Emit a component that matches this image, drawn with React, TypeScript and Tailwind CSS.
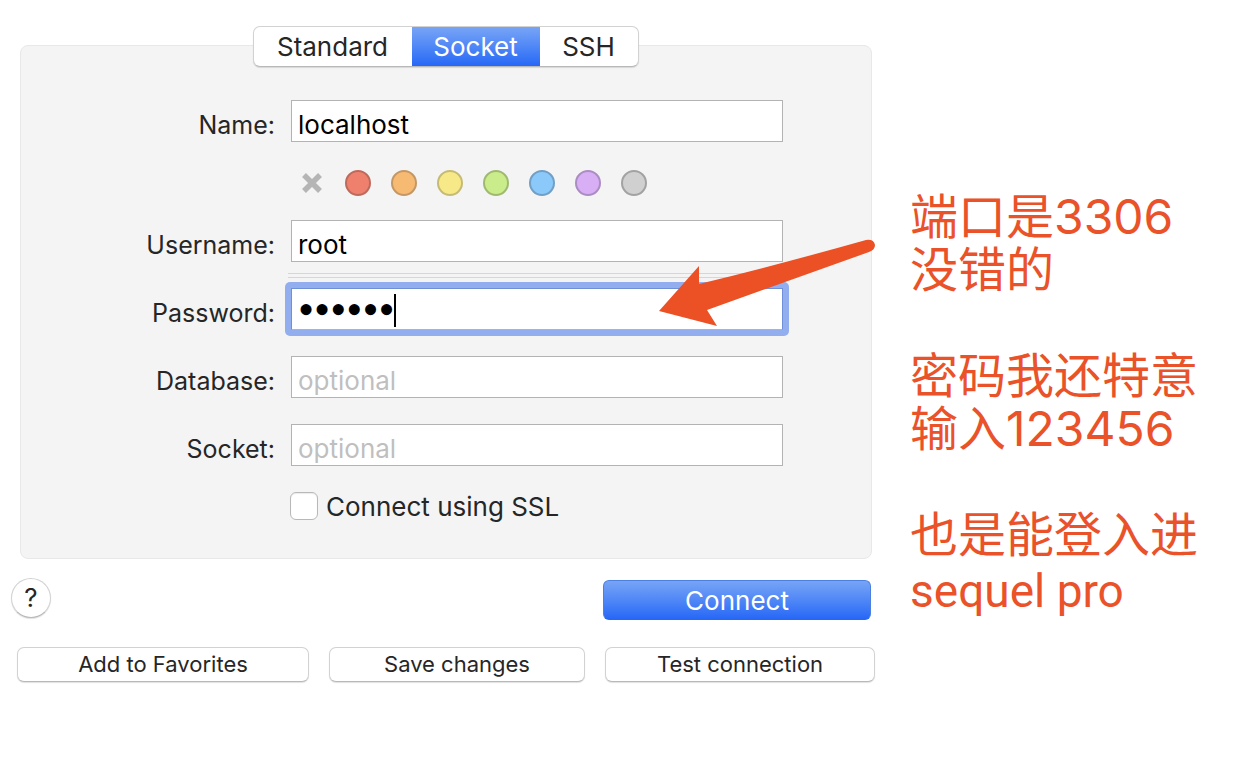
import { useState } from "react";

const tabs = [
  { name: "Standard", width: "w-[158px]" },
  { name: "Socket", width: "w-[128px]" },
  { name: "SSH", width: "w-[98px]" },
];

const colors = [
  { name: "Red", style: "bg-[#ee806d] border-[#bd6a5c]" },
  { name: "Orange", style: "bg-[#f6ba73] border-[#c59764]" },
  { name: "Yellow", style: "bg-[#f7e888] border-[#c6bb74]" },
  { name: "Green", style: "bg-[#caec8a] border-[#9fba70]" },
  { name: "Blue", style: "bg-[#8ac9fa] border-[#719fc6]" },
  { name: "Purple", style: "bg-[#d8aef5] border-[#ab8cc3]" },
  { name: "Gray", style: "bg-[#d0d0d0] border-[#a2a2a2]" },
];

const note = "端口是3306\n没错的\n\n密码我还特意\n输入123456\n\n也是能登入进";

const row = "grid grid-cols-[254px_1fr] gap-4 h-[42px]";
const label = "text-right text-[25px] leading-8 pt-[9px]";
const field = "block w-full h-[42px] min-w-0 bg-white border border-[#b3b3b3] px-[6px] pt-[6px] text-black outline-none placeholder:text-[#bfbfbf] placeholder:opacity-100";
const plainButton = "bg-white border border-[#d2d2d2] border-b-[#b8b8b8] shadow-[0_1px_1px_rgba(0,0,0,0.12)]";
const blueButton = "bg-linear-to-b from-[#78a4f6] to-[#2667f6] text-white";

const Tabs = () => {
  const [active, setActive] = useState("Socket");
  return (
    <div role="tablist" className={`flex h-[41px] w-fit mx-auto relative z-10 rounded-[7px] overflow-hidden ${plainButton}`}>
      {tabs.map((tab) => (
        <button
          key={tab.name}
          role="tab"
          aria-selected={active === tab.name}
          onClick={() => setActive(tab.name)}
          className={`${tab.width} ${active === tab.name ? blueButton : ""}`}
        >
          {tab.name}
        </button>
      ))}
    </div>
  );
};

const Swatches = () => (
  <div className="flex items-center gap-5 mt-7 mb-6 pl-[278px] h-[26px]">
    <button type="button" aria-label="No color" className="w-[26px] h-[26px]">
      <svg viewBox="0 0 26 26" className="w-full h-full" stroke="#b5b5b5" strokeWidth="5.4">
        <path d="M5 5L21 21M21 5L5 21" />
      </svg>
    </button>
    {colors.map((color) => (
      <input
        key={color.name}
        type="radio"
        name="color"
        aria-label={color.name}
        className={`appearance-none w-[26px] h-[26px] rounded-full border-2 ${color.style}`}
      />
    ))}
  </div>
);

const PasswordRow = () => (
  <div className={`${row} mt-[26px]`}>
    <label htmlFor="password" className={label}>Password:</label>
    <div className="relative">
      <div className="absolute -top-[15px] -left-[3px] right-0 h-[5px] border-y border-[#c6d8f4]" />
      <div className="-m-[6px] p-[6px] rounded-[5px] bg-[#92aeef]">
        <input
          id="password"
          type="password"
          defaultValue="123456"
          className="block w-full h-[42px] bg-white border border-[#b3b3b3] border-t-[#6f90d8] border-x-[#6f90d8] px-[6px] text-[46px] text-black outline-none font-['Liberation_Serif',serif]"
        />
      </div>
      <div className="absolute left-[103px] top-[6px] w-[2px] h-[33px] bg-black" />
      <svg viewBox="0 0 218 88" className="absolute -right-[94px] -top-[49px] w-[218px] h-[88px]" fill="#ec5025">
        <path d="M0 72L40 27L40 45Q122 25 207 1Q215 0 216 6Q216 11 210 13L48 71L58 87Z" />
      </svg>
    </div>
  </div>
);

const ConnectionForm = () => (
  <form className="-mt-[22px] pt-[54px] pr-[88px] pb-[38px] bg-[#f4f4f4] border border-[#e8e8e8] rounded-[8px] ml-1 mr-[3px]">
    <div className={row}>
      <label htmlFor="name" className={label}>Name:</label>
      <input id="name" defaultValue="localhost" className={field} />
    </div>
    <Swatches />
    <div className={row}>
      <label htmlFor="username" className={label}>Username:</label>
      <input id="username" defaultValue="root" className={field} />
    </div>
    <PasswordRow />
    <div className={`${row} mt-[26px]`}>
      <label htmlFor="database" className={label}>Database:</label>
      <input id="database" placeholder="optional" className={field} />
    </div>
    <div className={`${row} mt-[26px]`}>
      <label htmlFor="socket" className={label}>Socket:</label>
      <input id="socket" placeholder="optional" className={field} />
    </div>
    <div className="flex items-center gap-2 mt-[26px] pl-[269px] h-7">
      <input
        id="ssl"
        type="checkbox"
        className="appearance-none w-7 h-7 bg-white border border-[#b8b8b8] rounded-[6px] shadow-[inset_0_1px_1px_rgba(0,0,0,0.08)]"
      />
      <label htmlFor="ssl" className="pt-[2px]">Connect using SSL</label>
    </div>
  </form>
);

const App = () => {
  return (
    <main className="flex min-h-screen bg-white pt-[26px] text-[26px] leading-8 text-[#262626] font-['Inter','Noto_Sans_CJK_SC',sans-serif]">
      <section className="flex-1 min-w-0 pl-4 pr-[35px]">
        <Tabs />
        <ConnectionForm />
        <div className="flex justify-between mt-[19px] -ml-[5px] mr-1">
          <button aria-label="Help" className={`w-10 h-10 rounded-full ${plainButton}`}>?</button>
          <button className={`w-[268px] h-10 mt-[2px] pt-[2px] rounded-[6px] border border-[#4b7fe0] border-b-[#2667f6] ${blueButton}`}>Connect</button>
        </div>
        <div className="grid grid-cols-[292fr_256fr_270fr] gap-5 mt-[27px] ml-px text-[22px]">
          <button className={`h-[35px] pb-[3px] rounded-[7px] ${plainButton}`}>Add to Favorites</button>
          <button className={`h-[35px] pb-[3px] rounded-[7px] ${plainButton}`}>Save changes</button>
          <button className={`h-[35px] pb-[3px] rounded-[7px] ${plainButton}`}>Test connection</button>
        </div>
      </section>
      <aside className="w-[350px] shrink-0 pt-[164px] text-[48px] leading-[53px] text-[#ea5229]">
        <p className="whitespace-pre-line">{note}</p>
        <p className="pt-1 text-[46px] font-['Roboto',sans-serif]">sequel pro</p>
      </aside>
    </main>
  );
};

export default App;
